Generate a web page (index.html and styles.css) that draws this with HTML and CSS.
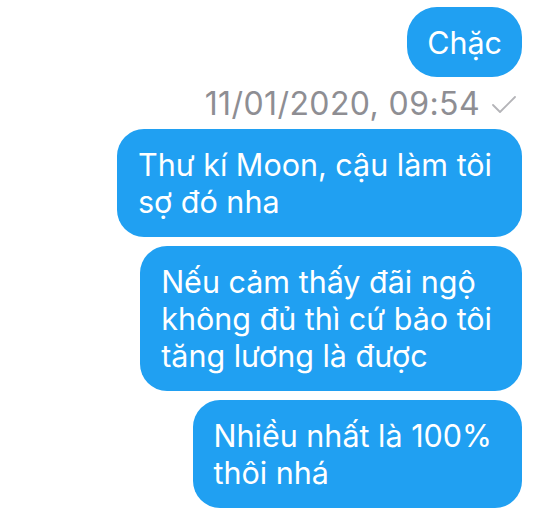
FILE: index.html
```html
<!DOCTYPE html>
<html lang="vi">
<head>
    <meta charset="UTF-8">
    <meta name="viewport" content="width=device-width, initial-scale=1.0">
    <title>Tin nhắn</title>
    <link rel="stylesheet" href="styles.css">
</head>
<body>
    <div class="thread">
        <div class="bubble bubble-short">Chặc</div>

        <div class="timestamp">
            <span>11/01/2020, 09:54</span>
            <svg class="check" width="24" height="18" viewBox="0 0 24 18">
                <path d="M1 9 L8 16 L23 1" fill="none" stroke="#b4b4b8" stroke-width="1.8" stroke-linecap="round" stroke-linejoin="round"/>
            </svg>
        </div>

        <div class="bubble">Thư kí Moon, cậu làm tôi<br>sợ đó nha</div>
        <div class="bubble">Nếu cảm thấy đãi ngộ<br>không đủ thì cứ bảo tôi<br>tăng lương là được</div>
        <div class="bubble">Nhiều nhất là 100%<br>thôi nhá</div>
    </div>
</body>
</html>
```

FILE: styles.css
```css
* {
    margin: 0;
    padding: 0;
    box-sizing: border-box;
}

body {
    font-family: Inter, 'Noto Sans', sans-serif;
    background: #ffffff;
    width: 551px;
    height: 515px;
    overflow: hidden;
}

.thread {
    display: flex;
    flex-direction: column;
    align-items: flex-end;
    gap: 9px;
    padding: 7px 29px 0 0;
}

.bubble {
    background: #20a0f2;
    color: #ffffff;
    font-size: 30.5px;
    line-height: 37px;
    padding: 17px 30px 17px 21px;
    border-radius: 27px;
    white-space: nowrap;
}

.bubble-short {
    padding: 17px 20px 16px 20px;
    border-radius: 30px;
}

.timestamp {
    display: flex;
    align-items: center;
    gap: 12px;
    margin: 0 6px -2px 0;
    color: #8e8e93;
    font-size: 32px;
    letter-spacing: 0.4px;
    line-height: 36px;
}

.check {
    display: block;
    margin-top: 2px;
}
```
